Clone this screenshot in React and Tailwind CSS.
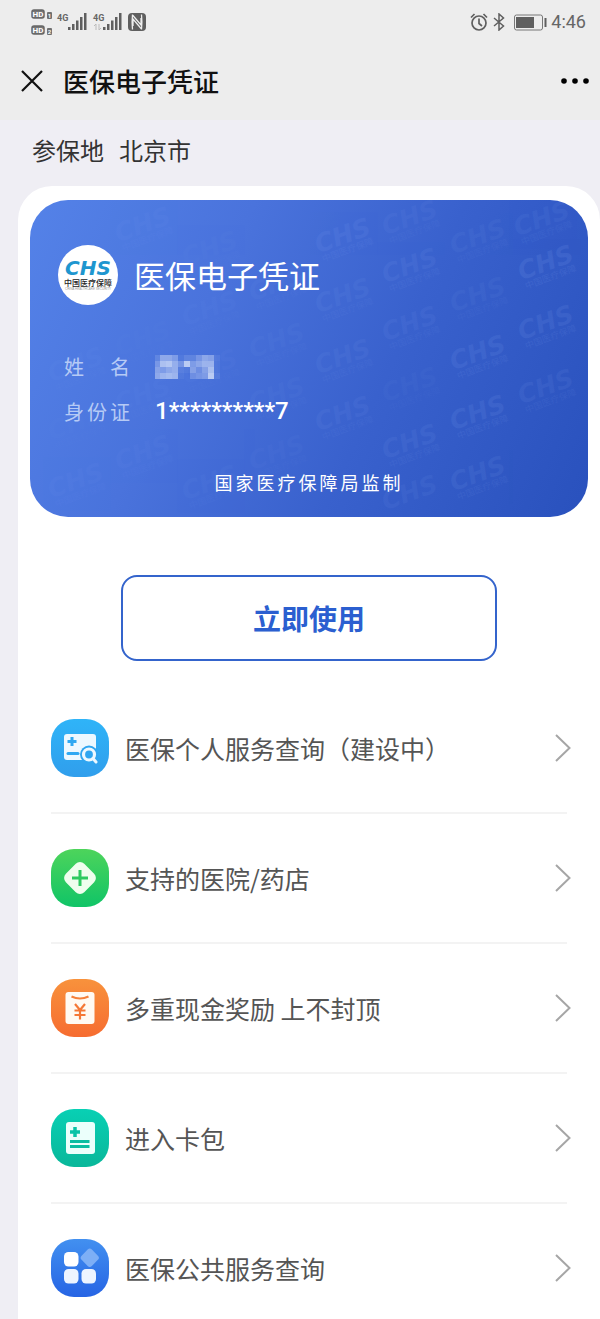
const MENU = [
  { label: '医保个人服务查询（建设中）', Icon: QueryIcon },
  { label: '支持的医院/药店', Icon: HospitalIcon },
  { label: '多重现金奖励 上不封顶', Icon: RewardIcon },
  { label: '进入卡包', Icon: CardIcon },
  { label: '医保公共服务查询', Icon: PublicIcon },
]

// [x, y, opacity] of each mark, measured inside the card
const MARKS = [
  [46, 166, 0.03], [46, 224, 0.02], [46, 282, 0.03],
  [113, 26, 0.03], [113, 140, 0.02], [113, 196, 0.03], [113, 254, 0.03],
  [180, 50, 0.02], [180, 110, 0.03], [180, 168, 0.03], [180, 284, 0.03],
  [247, 85, 0.04], [247, 142, 0.04], [247, 196, 0.04], [247, 254, 0.03],
  [313, 37, 0.07], [313, 97, 0.06], [313, 158, 0.06], [313, 215, 0.06],
  [380, 19, 0.05], [380, 67, 0.07], [380, 125, 0.06], [380, 186, 0.03], [380, 243, 0.07], [380, 294, 0.06],
  [448, 38, 0.05], [448, 96, 0.05], [448, 154, 0.09], [448, 214, 0.09], [448, 275, 0.08],
  [512, 20, 0.06], [516, 64, 0.1], [516, 124, 0.09], [516, 188, 0.07],
]

const MOSAIC = [
  [0.15, 0.45, 0.45, 0.35, 0.05, 0.15, 0.15, 0.3, 0.45, 0.4, 0.08],
  [0.3, 0.65, 0.7, 0.5, 0.3, 0.75, 0.35, 0.45, 0.55, 0.55, 0.05],
  [0.4, 0.35, 0.45, 0.5, 0.1, 0.05, 0.4, 0.25, 0.4, 0.65, 0.05],
  [0.45, 0.55, 0.6, 0.55, 0.05, 0, 0.25, 0.3, 0.35, 0.75, 0.1],
]

function Tile({ id, from, to, children }) {
  return (
    <svg viewBox="0 0 58 58" className="size-[58px] shrink-0" aria-hidden="true">
      <defs>
        <linearGradient id={id} x1="0" y1="0" x2="0" y2="1">
          <stop offset="0" stopColor={from} />
          <stop offset="1" stopColor={to} />
        </linearGradient>
      </defs>
      <rect width="58" height="58" rx="23" fill={`url(#${id})`} />
      {children}
    </svg>
  )
}

function QueryIcon() {
  return (
    <Tile id="tile-query" from="#2fb4f8" to="#309eec">
      <rect x="13" y="15" width="32" height="26" rx="3" fill="#edf8ff" />
      <path d="M21 18v9M16.500 22.500h9" stroke="#2fa8f2" strokeWidth="3" />
      <path d="M17 34.500h10" stroke="#2fa8f2" strokeWidth="3" strokeLinecap="round" />
      <circle cx="38" cy="35.500" r="9" fill="#2fa5f0" />
      <circle cx="38" cy="35.500" r="5.500" fill="none" stroke="#edf8ff" strokeWidth="3.200" />
      <path d="M42 39.500l3 3.500" stroke="#edf8ff" strokeWidth="3" strokeLinecap="round" />
    </Tile>
  )
}

function HospitalIcon() {
  return (
    <Tile id="tile-hospital" from="#4dd45b" to="#10c467">
      <rect x="16" y="16" width="26" height="26" rx="6" fill="#effeee" transform="rotate(45 29 29)" />
      <path d="M29 21v16M21 29h16" stroke="#2dca60" strokeWidth="3" />
    </Tile>
  )
}

function RewardIcon() {
  return (
    <Tile id="tile-reward" from="#f8923c" to="#f66c30">
      <rect x="14.500" y="13" width="29" height="32" rx="3" fill="#fffaf2" />
      <path d="M20.500 17.500q8.500 4 17 0" stroke="#f58039" strokeWidth="2.200" fill="none" />
      <path d="M24 25l5 6 5-6M29 31v9.500M23.500 31.500h11M23.500 36h11" stroke="#f57835" strokeWidth="2.200" fill="none" />
    </Tile>
  )
}

function CardIcon() {
  return (
    <Tile id="tile-card" from="#08d0b4" to="#09b79a">
      <rect x="15" y="13" width="29" height="32" rx="3" fill="#ebfffb" />
      <path d="M24 18v10M19 23h10" stroke="#0ac3a7" strokeWidth="3.500" />
      <path d="M19 32.500h19.500M19 37.500h19.500" stroke="#0abda1" strokeWidth="3" />
    </Tile>
  )
}

function PublicIcon() {
  return (
    <Tile id="tile-public" from="#4290f0" to="#2664e4">
      <rect x="13" y="13" width="14.500" height="14.500" rx="4.500" fill="#fff" />
      <rect x="31.500" y="11.500" width="14.500" height="14.500" rx="3" fill="#7daff6" transform="rotate(45 38.750 18.750)" />
      <rect x="13" y="30" width="14.500" height="14.500" rx="4.500" fill="#edf4ff" />
      <rect x="30.500" y="30" width="14.500" height="14.500" rx="4.500" fill="#edf4ff" />
    </Tile>
  )
}

function Chevron() {
  return (
    <svg viewBox="0 0 16 28" className="h-7 w-4 shrink-0" fill="none" stroke="#a6a6a6" strokeWidth="2" aria-hidden="true">
      <path d="M1 1l13.500 13L1 27" />
    </svg>
  )
}

function Signal() {
  return (
    <svg viewBox="0 0 19 18" className="h-[18px] w-[19px]" fill="#5f5f5f">
      <rect x="0" y="14" width="2.500" height="3" />
      <rect x="4" y="11" width="2.500" height="6" />
      <rect x="8" y="7.500" width="2.500" height="9.500" />
      <rect x="12" y="4" width="2.500" height="13" />
      <rect x="16" y="0" width="2.500" height="17" />
    </svg>
  )
}

function HdBadge({ sim }) {
  return (
    <svg viewBox="0 0 22 11" className="h-[11px] w-[22px]">
      <rect x="1" y="1" width="12" height="8" rx="2" fill="#777" stroke="#666" strokeWidth="1.500" />
      <text x="7" y="8" textAnchor="middle" fontSize="8" fontWeight="700" fontFamily="Roboto, sans-serif" fill="#fff">HD</text>
      <rect x="16" y="3" width="5" height="7" rx="1" fill="#707070" />
      <text x="18.500" y="9" textAnchor="middle" fontSize="6" fontWeight="700" fontFamily="Roboto, sans-serif" fill="#fff">{sim}</text>
    </svg>
  )
}

function StatusBar() {
  return (
    <div className="flex h-11 items-center justify-between pr-3.5 pl-[31px] font-[Roboto,sans-serif] text-[#666]">
      <div className="flex items-center">
        <div className="flex flex-col gap-[5px]">
          <HdBadge sim="1" />
          <HdBadge sim="2" />
        </div>
        <div className="ml-1 flex w-[11px] flex-col">
          <span className="text-[9px] leading-[9px] font-bold">4G</span>
          <span className="h-2" />
        </div>
        <Signal />
        <div className="ml-1.5 flex w-[10px] flex-col">
          <span className="text-[9px] leading-[9px] font-bold">4G</span>
          <svg viewBox="0 0 10 8" className="h-2 w-2.5" fill="none" stroke="#bbb">
            <path d="M3 7V1L1 3M6 1v6l2-2" />
          </svg>
        </div>
        <Signal />
        <svg viewBox="0 0 18 18" className="ml-1.5 size-[18px]">
          <rect width="18" height="18" rx="4" fill="#5f5f5f" />
          <path d="M4.500 1.500C4 6 4 12 4.500 16.500M4.500 2l8.500 10V5M13.500 16.500C14 12 14 6 13.500 1.500M13.500 16L5 6v7" fill="none" stroke="#eee" strokeWidth="1.300" />
        </svg>
      </div>
      <div className="flex items-center">
        <svg viewBox="0 0 18 18" className="size-[18px]" fill="none" stroke="#5f5f5f" strokeWidth="1.700">
          <circle cx="9" cy="10" r="7" />
          <path d="M9 5.500v5l3 2.500M1 4.500L4.500 1M17 4.500L13.500 1" />
        </svg>
        <svg viewBox="0 0 12 18" className="ml-[5px] h-[18px] w-3" fill="none" stroke="#5f5f5f" strokeWidth="1.500">
          <path d="M1 5l9.500 8L6 17V1l4.500 4L1 13" />
        </svg>
        <svg viewBox="0 0 33 17" className="ml-[9px] h-[17px] w-[33px]">
          <rect x="0.500" y="1" width="28" height="15" rx="2" fill="none" stroke="#777" />
          <rect x="2" y="3" width="18" height="11" fill="#5f5f5f" />
          <rect x="30.500" y="4" width="2" height="9" fill="#5f5f5f" />
        </svg>
        <span className="ml-1 text-lg leading-6">4:46</span>
      </div>
    </div>
  )
}

function NavBar() {
  return (
    <header className="flex h-[76px] items-center pr-2.5 pb-[3px] pl-[21px]">
      <button type="button" aria-label="关闭">
        <svg viewBox="0 0 22 22" className="size-[22px]" stroke="#111" strokeWidth="2.200">
          <path d="M1 1l20 20M21 1L1 21" />
        </svg>
      </button>
      <h1 className="ml-5 flex-1 text-[26px] leading-9 font-medium text-[#111]">医保电子凭证</h1>
      <button type="button" aria-label="更多">
        <svg viewBox="0 0 30 6" className="h-1.5 w-[30px]">
          <circle cx="4" cy="3" r="2.800" />
          <circle cx="15" cy="3" r="2.800" />
          <circle cx="26" cy="3" r="2.800" />
        </svg>
      </button>
    </header>
  )
}

function Logo() {
  return (
    <svg viewBox="0 0 60 60" className="size-[60px] shrink-0" role="img" aria-label="CHS 中国医疗保障">
      <circle cx="30" cy="30" r="30" fill="#fff" />
      <text x="30" y="30" textAnchor="middle" fontSize="20" fontWeight="700" fontStyle="italic" fontFamily="DejaVu Sans, sans-serif" fill="#1e96cf">CHS</text>
      <text x="30" y="41" textAnchor="middle" fontSize="8" fontWeight="500" fontFamily="Noto Sans CJK SC, sans-serif" fill="#222">中国医疗保障</text>
      <text x="30" y="45" textAnchor="middle" fontSize="3" fontFamily="Liberation Sans, sans-serif" fill="#999">CHINA HEALTHCARE SECURITY</text>
    </svg>
  )
}

function Watermark() {
  return (
    <svg className="absolute inset-0 h-full w-full" aria-hidden="true">
      {MARKS.map(([x, y, opacity]) => (
        <g key={`${x}-${y}`} transform={`translate(${x} ${y}) rotate(-20)`} fill="#9dbcff" opacity={opacity} textAnchor="middle">
          <text y="7" fontSize="25" fontWeight="700" fontStyle="italic" fontFamily="DejaVu Sans, sans-serif">CHS</text>
          {y < 290 && <text y="17" fontSize="9" fontFamily="Noto Sans CJK SC, sans-serif">中国医疗保障</text>}
        </g>
      ))}
    </svg>
  )
}

function MaskedName() {
  return (
    <svg viewBox="0 0 66 24" className="h-6 w-[66px]" role="img" aria-label="已隐藏">
      {MOSAIC.map((row, y) =>
        row.map((opacity, x) => (
          <rect key={`${x}-${y}`} x={x * 6 - 1} y={y * 6} width="6" height="6" fill="#e0e9fb" opacity={opacity} />
        ))
      )}
    </svg>
  )
}

function InsuranceCard() {
  return (
    <section className="relative overflow-hidden rounded-[38px] bg-linear-[115deg,#5482e8_0%,#4a73dc_32%,#3961cd_62%,#2951bd_100%] pt-[45px] pb-[21px] text-white">
      <Watermark />
      <div className="relative">
        <div className="flex items-center gap-4 pl-7">
          <Logo />
          <h2 className="text-[31px] leading-10">医保电子凭证</h2>
        </div>
        <dl className="mt-[39px] grid grid-cols-[91px_1fr] items-center pl-[34px]">
          <dt className="text-xl leading-[45px] tracking-[3px] text-[#b6caf5]">姓　名</dt>
          <dd><MaskedName /></dd>
          <dt className="text-xl leading-[45px] tracking-[3px] text-[#b6caf5]">身份证</dt>
          <dd className="font-[Roboto,sans-serif] text-2xl leading-[45px] font-medium">1**********7</dd>
        </dl>
        <p className="mt-[34px] text-center text-lg leading-7 tracking-[3px]">国家医疗保障局监制</p>
      </div>
    </section>
  )
}

function MenuRow({ label, Icon, last }) {
  return (
    <li className={last ? '' : 'border-b-2 border-[#f3f3f3]'}>
      <a href="#" className="flex h-32 items-center">
        <Icon />
        <span className="ml-4 flex-1 text-[25px] leading-9 text-[#555]">{label}</span>
        <span className="-mr-1">
          <Chevron />
        </span>
      </a>
    </li>
  )
}

export default function App() {
  return (
    <div className="min-h-screen bg-[#efeef4] font-['Noto_Sans_CJK_SC',sans-serif]">
      <div className="bg-[#ededed]">
        <StatusBar />
        <NavBar />
      </div>
      <p className="flex gap-[15px] px-8 pt-3 pb-[18px] text-2xl leading-9 text-[#333]">
        <span>参保地</span>
        <span>北京市</span>
      </p>
      <main className="ml-[18px] rounded-t-[34px] bg-white px-3 pt-3.5">
        <InsuranceCard />
        <div className="px-[91px] pt-[58px]">
          <button type="button" className="h-[86px] w-full rounded-2xl border-2 border-[#3464cc] text-[28px] font-bold text-[#2b5fd0]">
            立即使用
          </button>
        </div>
        <ul className="mt-[23px] px-[21px]">
          {MENU.map((item, i) => (
            <MenuRow key={item.label} {...item} last={i === MENU.length - 1} />
          ))}
        </ul>
      </main>
    </div>
  )
}
